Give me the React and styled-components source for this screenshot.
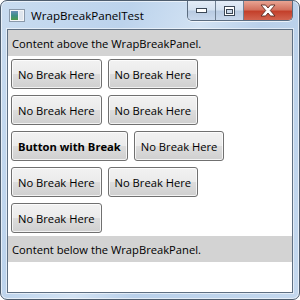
import React from 'react'
import styled, { createGlobalStyle } from 'styled-components'

const GlobalStyle = createGlobalStyle`
  html, body {
    margin: 0;
    padding: 0;
    background: #ffffff;
  }
`

const uiFont = `'Segoe UI', 'Open Sans', 'Noto Sans', sans-serif`

const Window = styled.div`
  box-sizing: border-box;
  width: 300px;
  height: 300px;
  border: 1px solid #4e5d6e;
  border-radius: 7px;
  padding: 0 6px 6px;
  display: flex;
  flex-direction: column;
  background: linear-gradient(115deg, #c9dcf0 0%, #bcd3ec 30%, #d2e2f3 48%, #b9d0ea 62%, #c4d8ee 100%);
  box-shadow: inset 0 0 0 1px rgba(255, 255, 255, 0.6);
  font-family: ${uiFont};
  overflow: hidden;
`

const TitleBar = styled.div`
  height: 28px;
  display: flex;
  align-items: flex-start;
  flex-shrink: 0;
`

const TitleLeft = styled.div`
  display: flex;
  align-items: center;
  gap: 6px;
  padding: 7px 0 0 2px;
  flex: 1;
`

const TitleText = styled.span`
  font-size: 11.6px;
  color: #000;
`

const CaptionGroup = styled.div`
  display: flex;
  border: 1px solid #5b6c80;
  border-top: none;
  border-radius: 0 0 5px 5px;
  overflow: hidden;
  box-shadow: 0 1px 0 rgba(255, 255, 255, 0.7);
`

const CaptionButton = styled.div`
  width: ${({ w }) => w}px;
  height: 19px;
  display: flex;
  align-items: center;
  justify-content: center;
  border-left: ${({ first }) => (first ? 'none' : '1px solid #6f7f92')};
  background: ${({ close }) =>
    close
      ? 'linear-gradient(to bottom, #e8a493 0%, #d3725f 45%, #c4402b 55%, #d26450 100%)'
      : 'linear-gradient(to bottom, #e3ecf7 0%, #d4e1f0 45%, #b9cbe2 55%, #c8d8ec 100%)'};
`

const Client = styled.div`
  flex: 1;
  border: 1px solid #5e6f82;
  background: #fff;
  display: flex;
  flex-direction: column;
  box-shadow: 0 0 0 1px rgba(255, 255, 255, 0.55);
`

const Band = styled.div`
  background: #d3d3d3;
  height: 26px;
  display: flex;
  align-items: center;
  padding-left: 4px;
  font-size: 11.2px;
  color: #000;
`

const WrapPanel = styled.div`
  display: flex;
  flex-wrap: wrap;
  align-content: flex-start;
`

const LineBreak = styled.div`
  flex-basis: 100%;
  height: 0;
`

const Button = styled.button`
  box-sizing: border-box;
  height: 30px;
  margin: 3px;
  padding: 0 6px;
  border: 1px solid #707070;
  border-radius: 3px;
  background: linear-gradient(to bottom, #f2f2f2 0%, #ebebeb 50%, #dddddd 50%, #cfcfcf 100%);
  box-shadow: inset 0 0 0 1px rgba(255, 255, 255, 0.75);
  font-family: ${uiFont};
  font-size: 11.2px;
  font-weight: ${({ bold }) => (bold ? 700 : 400)};
  color: #000;
  white-space: nowrap;
`

const AppIcon = () => (
  <svg width="16" height="13" viewBox="0 0 16 13">
    <defs>
      <linearGradient id="ig" x1="0" y1="0" x2="0" y2="1">
        <stop offset="0" stopColor="#6a8fb8" />
        <stop offset="0.5" stopColor="#3f8f86" />
        <stop offset="1" stopColor="#4f9a4a" />
      </linearGradient>
    </defs>
    <rect x="0.5" y="0.5" width="15" height="12" fill="#f4f6f8" stroke="#8a99aa" />
    <rect x="2" y="2" width="7" height="9" fill="url(#ig)" />
    <rect x="10" y="2" width="4" height="9" fill="#dfe6ee" />
  </svg>
)

const MinGlyph = () => (
  <svg width="11" height="5" viewBox="0 0 11 5">
    <rect x="0.5" y="0.5" width="10" height="4" fill="#fff" stroke="#3b4756" />
  </svg>
)

const MaxGlyph = () => (
  <svg width="11" height="10" viewBox="0 0 11 10">
    <rect x="0.5" y="0.5" width="10" height="9" fill="#fff" stroke="#3b4756" />
    <rect x="2.5" y="3.5" width="6" height="4" fill="#c9d7e8" stroke="#3b4756" />
  </svg>
)

const CloseGlyph = () => (
  <svg width="16" height="13" viewBox="0 0 16 13">
    <path
      d="M1 1 L5.5 1 L8 4 L10.5 1 L15 1 L10.3 6.5 L15 12 L10.5 12 L8 9 L5.5 12 L1 12 L5.7 6.5 Z"
      fill="#fff"
      stroke="#5a2a22"
      strokeWidth="0.9"
      strokeLinejoin="round"
    />
  </svg>
)

export default function App() {
  return (
    <>
      <GlobalStyle />
      <Window>
        <TitleBar>
          <TitleLeft>
            <AppIcon />
            <TitleText>WrapBreakPanelTest</TitleText>
          </TitleLeft>
          <CaptionGroup>
            <CaptionButton w={27} first>
              <MinGlyph />
            </CaptionButton>
            <CaptionButton w={27}>
              <MaxGlyph />
            </CaptionButton>
            <CaptionButton w={48} close>
              <CloseGlyph />
            </CaptionButton>
          </CaptionGroup>
        </TitleBar>
        <Client>
          <Band>Content above the WrapBreakPanel.</Band>
          <WrapPanel>
            <Button>No Break Here</Button>
            <Button>No Break Here</Button>
            <Button>No Break Here</Button>
            <Button>No Break Here</Button>
            <LineBreak />
            <Button bold>Button with Break</Button>
            <Button>No Break Here</Button>
            <Button>No Break Here</Button>
            <Button>No Break Here</Button>
            <Button>No Break Here</Button>
          </WrapPanel>
          <Band>Content below the WrapBreakPanel.</Band>
        </Client>
      </Window>
    </>
  )
}
